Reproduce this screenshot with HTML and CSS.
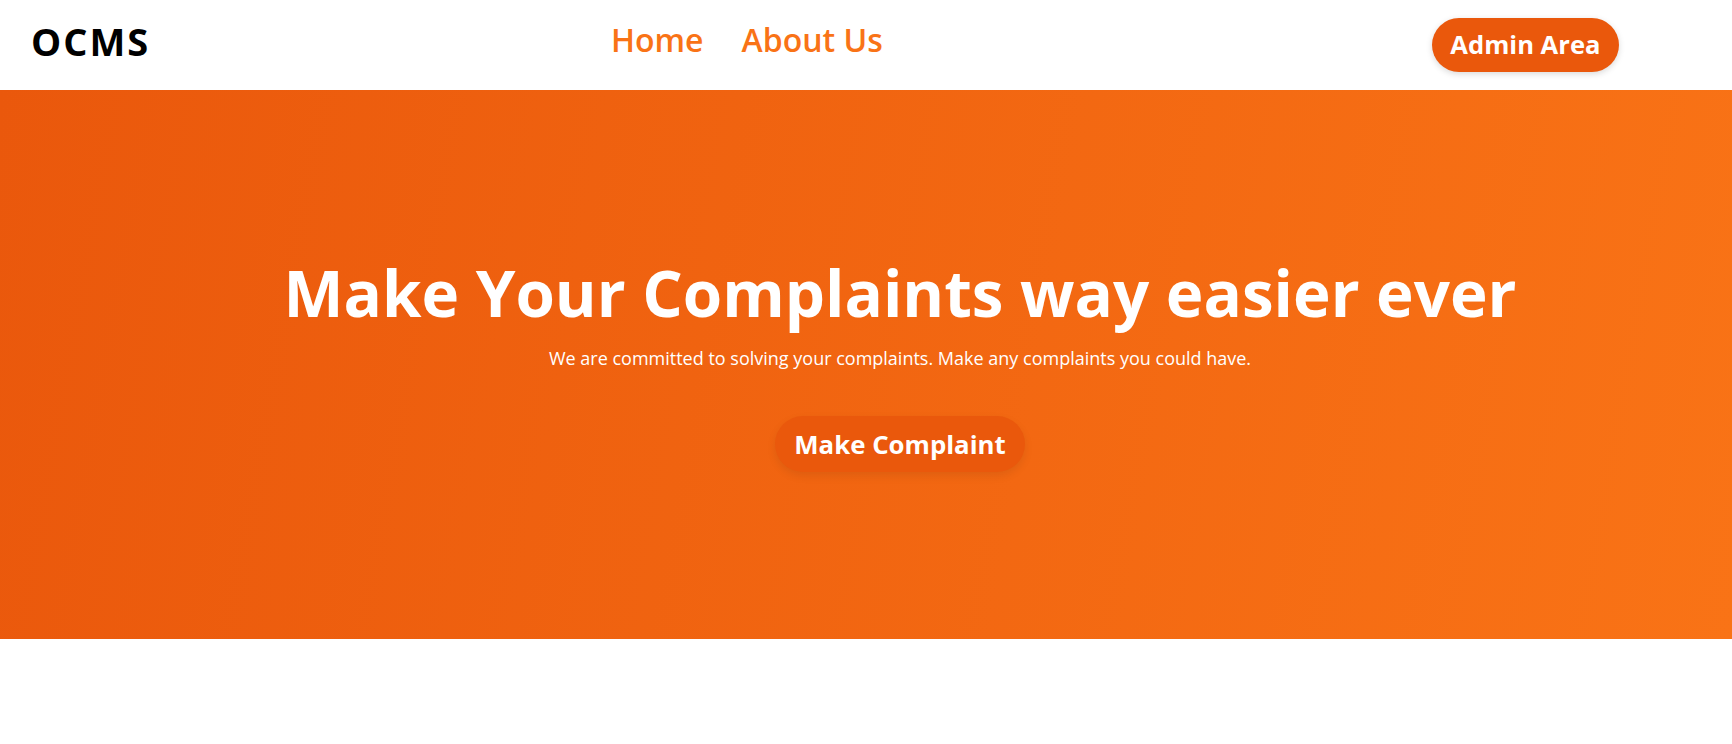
FILE: index.html
```html
<!DOCTYPE html>
<html lang="en">
<head>
<meta charset="utf-8">
<title>OCMS</title>
<link rel="stylesheet" href="styles.css">
</head>
<body>
<header class="site-header">
  <div class="logo">OCMS</div>
  <nav class="main-nav">
    <a href="#" class="nav-link">Home</a>
    <a href="#" class="nav-link">About Us</a>
  </nav>
  <a href="#" class="btn btn-admin">Admin Area</a>
</header>
<section class="hero">
  <div class="hero-content">
    <h1 class="hero-title">Make Your Complaints way easier ever</h1>
    <p class="hero-sub">We are committed to solving your complaints. Make any complaints you could have.</p>
    <a href="#" class="btn btn-complaint">Make Complaint</a>
  </div>
</section>
<section class="below"></section>
</body>
</html>
```

FILE: styles.css
```css
* { box-sizing: border-box; }
html, body { margin: 0; padding: 0; }
body {
  font-family: "Open Sans", "Noto Sans", sans-serif;
  background: #ffffff;
  color: #000;
}
a { text-decoration: none; }

.site-header {
  height: 90px;
  display: flex;
  align-items: flex-start;
  padding: 18px 113px 0 31px;
  line-height: 1.2;
}
.logo {
  font-size: 38px;
  font-weight: 700;
  letter-spacing: 2px;
  color: #000;
  width: 580px;
  margin-top: 1px;
}
.main-nav {
  display: flex;
  gap: 38px;
  margin-top: 3px;
}
.nav-link {
  font-size: 32px;
  color: #f97316;
  font-weight: 600;
}
.btn {
  display: inline-block;
  background: #ea580c;
  color: #fff;
  font-weight: 700;
  border-radius: 999px;
  line-height: 1.2;
}
.btn-admin {
  margin-left: auto;
  font-size: 25.6px;
  padding: 11.5px 18.5px;
  box-shadow: 0 2px 6px rgba(0,0,0,0.15);
}

.hero {
  height: 549px;
  background: linear-gradient(100deg, #ea580c 0%, #f97316 100%);
  display: flex;
  align-items: center;
  justify-content: center;
  padding-left: 68px;
  padding-bottom: 7px;
}
.hero-content {
  display: flex;
  flex-direction: column;
  align-items: center;
  color: #fff;
}
.hero-title {
  margin: 0;
  font-size: 63.7px;
  font-weight: 700;
  line-height: 86px;
}
.hero-sub {
  margin: 9px 0 0;
  font-size: 18px;
  line-height: 1.5;
}
.btn-complaint {
  margin-top: 44px;
  font-size: 25.8px;
  padding: 12.5px 19.5px;
  box-shadow: 0 4px 10px rgba(0,0,0,0.08);
}
.below {
  height: 105px;
}
```
